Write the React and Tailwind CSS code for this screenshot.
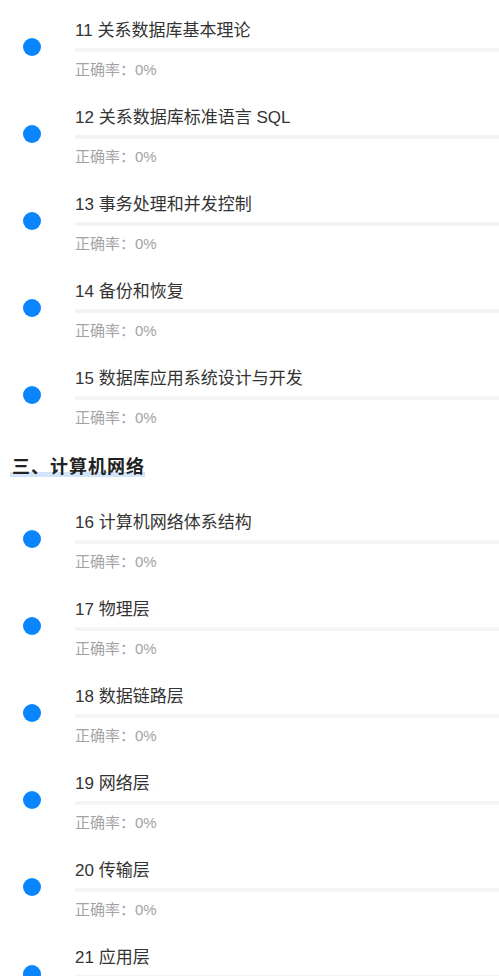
import React from "react";

const groupA = [
  { n: "11", t: "关系数据库基本理论" },
  { n: "12", t: "关系数据库标准语言 SQL" },
  { n: "13", t: "事务处理和并发控制" },
  { n: "14", t: "备份和恢复" },
  { n: "15", t: "数据库应用系统设计与开发" },
];

const groupB = [
  { n: "16", t: "计算机网络体系结构" },
  { n: "17", t: "物理层" },
  { n: "18", t: "数据链路层" },
  { n: "19", t: "网络层" },
  { n: "20", t: "传输层" },
  { n: "21", t: "应用层" },
];

function Item({ n, t }) {
  return (
    <div className="flex h-[87px] shrink-0">
      <div className="w-[75px] shrink-0 flex justify-center pt-[32px] pr-[11px]">
        <div className="w-[18px] h-[18px] rounded-full bg-[#0a84ff]" />
      </div>
      <div className="flex-1 flex flex-col pt-[13px]">
        <div className="h-[24px] leading-[24px] text-[17px] text-[#333333] whitespace-nowrap">
          {n} {t}
        </div>
        <div className="mt-[5px] h-[4px] bg-[#f4f4f4]" />
        <div className="mt-[8px] h-[20px] leading-[20px] text-[15px] text-[#a3a3a3] whitespace-nowrap">
          正确率：0%
        </div>
      </div>
    </div>
  );
}

export default function App() {
  return (
    <div className="w-[499px] h-[976px] overflow-hidden bg-white font-['Liberation_Sans','Noto_Sans_CJK_SC',sans-serif] pt-[6px] flex flex-col">
      {groupA.map((it) => (
        <Item key={it.n} {...it} />
      ))}
      <div className="h-[57px] shrink-0 pt-[13px] pl-[10px]">
        <span className="inline-block h-[26px] leading-[26px] pl-[2px] text-[18px] font-bold tracking-[1px] text-[#222222] bg-[linear-gradient(to_bottom,transparent_18px,#d2e4fa_18px,#d2e4fa_23px,transparent_23px)]">
          三、计算机网络
        </span>
      </div>
      {groupB.map((it) => (
        <Item key={it.n} {...it} />
      ))}
    </div>
  );
}
